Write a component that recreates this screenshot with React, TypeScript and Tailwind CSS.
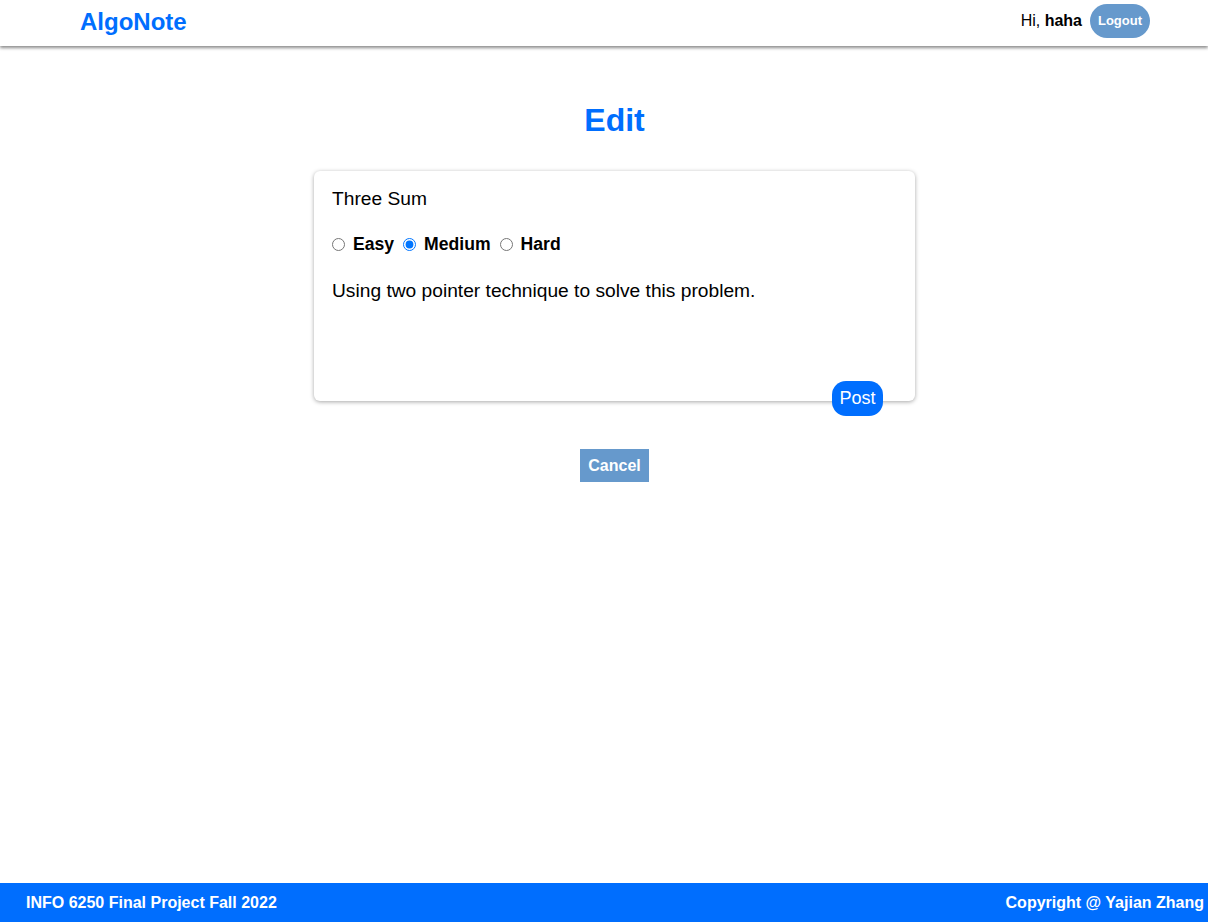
import React, { useState } from 'react';

const App: React.FC = () => {
  const [level, setLevel] = useState('Medium');

  return (
    <div className="min-h-screen flex flex-col bg-white text-black font-['Liberation_Sans',Arial,sans-serif]">
      {/* Header */}
      <header className="h-[46px] flex items-center justify-between pl-[80px] pr-[58px] shadow-[0_2px_3px_rgba(0,0,0,0.45)] relative z-10">
        <span className="text-[24px] font-bold text-[#006efe] leading-none mb-[2px]">AlgoNote</span>
        <div className="flex items-center gap-2 mb-[4px]">
          <span className="text-[16px]">
            Hi, <b>haha</b>
          </span>
          <button className="h-[34px] w-[60px] rounded-full bg-[#6699cc] text-white text-[13px] font-bold">
            Logout
          </button>
        </div>
      </header>

      {/* Main */}
      <main className="flex flex-col items-center pl-[21px]">
        <h1 className="mt-[56px] text-[32px] font-bold text-[#006efe] leading-[37px]">Edit</h1>

        <div className="relative mt-[32px] w-[601px] h-[230px] rounded-[6px] bg-white shadow-[0_1px_4px_rgba(0,0,0,0.35)] px-[18px] pt-[17px]">
          <div className="text-[19.2px] leading-[22px]">Three Sum</div>
          <div className="mt-[24px] flex items-center text-[17.6px] font-bold leading-[21px]">
            {['Easy', 'Medium', 'Hard'].map((l) => (
              <label key={l} className="flex items-center gap-[8px] mr-[9px]">
                <input
                  type="radio"
                  name="level"
                  checked={level === l}
                  onChange={() => setLevel(l)}
                  className="m-0 w-[13px] h-[13px]"
                />
                {l}
              </label>
            ))}
          </div>
          <div className="mt-[25px] text-[19.2px] leading-[22px]">Using two pointer technique to solve this problem.</div>
          <button className="absolute right-[32px] bottom-[-15px] h-[35px] w-[51px] rounded-[14px] bg-[#006efe] text-white text-[18px]">
            Post
          </button>
        </div>

        <button className="mt-[48px] h-[33px] px-[8px] bg-[#6699cc] text-white text-[16px] font-bold">
          Cancel
        </button>
      </main>

      {/* Footer */}
      <footer className="mt-auto h-[39px] bg-[#006efe] flex items-center justify-between pl-[26px] pr-[4px] text-white text-[16px] font-bold">
        <span>INFO 6250 Final Project Fall 2022</span>
        <span>Copyright @ Yajian Zhang</span>
      </footer>
    </div>
  );
};

export default App;
